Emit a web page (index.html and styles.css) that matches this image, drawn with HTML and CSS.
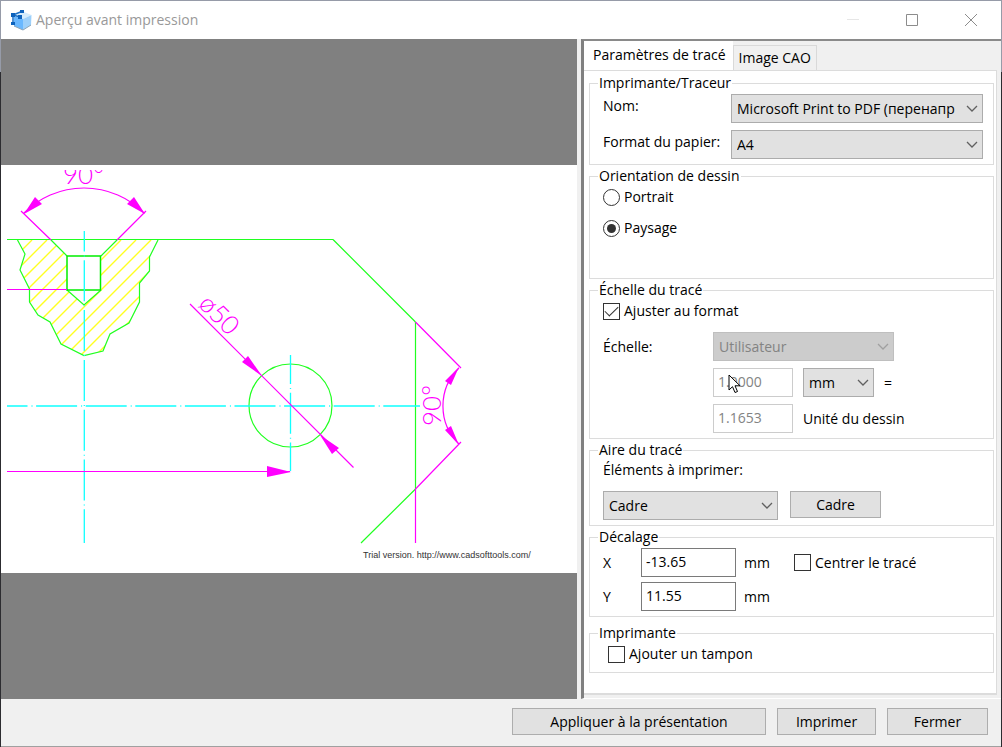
FILE: index.html
```html
<!DOCTYPE html>
<html lang="fr">
<head>
<meta charset="utf-8">
<meta name="viewport" content="width=device-width, initial-scale=1">
<title>Aperçu avant impression</title>
<link rel="stylesheet" href="styles.css">
</head>
<body>
<div class="window">
  <header class="titlebar">
    <svg class="app-icon" viewBox="0 0 21 21" aria-hidden="true">
      <path d="M4 5 L13 2 L20.500 5 L12 9 Z" fill="#d4ecfd"/>
      <path d="M12 9 L20.500 5 L20 15 L12 20 Z" fill="#9dd0fa"/>
      <path d="M3 6 L12 9 L12 20 L3 16 Z" fill="#6ab8ff"/>
      <path d="M3 16L12 20L20 15" stroke="#8fa6b8" fill="none"/>
      <path d="M2 5 L12 1 M2 5 L2 14 M2 5 L9 7" stroke="#1c6fc4" stroke-width="1.500" fill="none"/>
      <g fill="#0e63bd"><rect x="0" y="3" width="4" height="4"/><rect x="9" y="0" width="4" height="3"/><rect x="7" y="5" width="4" height="4"/><rect x="0" y="12" width="4" height="3"/></g>
    </svg>
    <h1 class="title">Aperçu avant impression</h1>
    <button class="caption-button" type="button" aria-label="Réduire" disabled>
      <svg width="14" height="14" viewBox="0 0 14 14"><path d="M1 6.500H13" stroke="#e6e6e6"/></svg>
    </button>
    <button class="caption-button" type="button" aria-label="Agrandir">
      <svg width="14" height="14" viewBox="0 0 14 14"><path d="M1.500 1.500H12.500V12.500H1.500Z" stroke="#8c8c8c" fill="none"/></svg>
    </button>
    <button class="caption-button" type="button" aria-label="Fermer la fenêtre">
      <svg width="14" height="14" viewBox="0 0 14 14"><path d="M1 1L13 13M13 1L1 13" stroke="#8c8c8c" fill="none"/></svg>
    </button>
  </header>

  <main class="content">
    <section class="preview" aria-label="Aperçu">
      <svg class="sheet" viewBox="1 165 576 408">
        <defs>
          <clipPath id="hatch-area">
            <path clip-rule="evenodd" d="M17 240L25 254L20 270L30 289V302L38 315L50 322L61 344L84 355L103 351L110 334L129 323L139 302V283L149 271V257L158 240Z M51 240L67 256V290L84 305L101 290V256L117 240Z"/>
          </clipPath>
          <clipPath id="print-area"><rect x="7" y="170" width="564" height="373"/></clipPath>
        </defs>
        <g clip-path="url(#hatch-area)" stroke="#ffff20" stroke-width="1.400">
          <path d="M17 240L2 255M32 240L2 270M47 240L2 285M62 240L2 300M77 240L2 315M92 240L2 330M106 240L2 344M121 240L2 359M136 240L2 374M151 240L12 379M166 240L27 379M181 240L42 379M196 240L57 379M211 240L72 379M226 240L87 379"/>
        </g>
        <g fill="none" stroke="#20ff20" stroke-width="1.200">
          <path d="M17.500 240L25 254L20 270L29.500 289V302L38 315L50 322L61 344L84 355.500L103 351L110 334L129 323L139.500 302V283L149.500 271V257L158 240"/>
          <path d="M51 240L67 256M101 256L117 240M67 290L84 305L101 290"/>
          <path d="M67 256H100.500V290H67Z" stroke="#00ee00" stroke-width="1.500"/>
          <path d="M333 239.500L415.500 322M415.500 489L361 543"/>
          <path d="M7 239.500H333M415.500 322V489"/>
          <circle cx="290.500" cy="405.500" r="41.500"/>
        </g>
        <g fill="none" stroke="#10ffff" stroke-width="1.300">
          <path d="M84.300 231V543" stroke-dasharray="41 4 1 3.800" stroke-dashoffset="20.500"/>
          <path d="M7 406H420" stroke-dasharray="41 4 1 3.600" stroke-dashoffset="20.500"/>
          <path d="M290.500 355V471" stroke-dasharray="41 4 1 3.800" stroke-dashoffset="12"/>
        </g>
        <g fill="none" stroke="#ff00ff" stroke-width="1.200">
          <path d="M7 289.500H67M7 471.500H290M415.500 489V543"/>
          <path d="M21 211L51 240M146 211L117 240M24 213A84.500 84.500 0 0 1 144 213"/>
          <path d="M190 304L353.500 467.500M415.500 322L461 368M415.500 489L461 442M459 368A53 53 0 0 0 459 444"/>
        </g>
        <g fill="#ff00ff">
          <path d="M24 214L35 197L42 204ZM145 214L134 197L127 204Z"/>
          <path d="M262 376L242 362L248 356ZM320 435L332 454L339 448Z"/>
          <path d="M459 367L445 381L451 385ZM459 445L445 430L451 426ZM291 472L267 466V477Z"/>
        </g>
        <g class="dimension" clip-path="url(#print-area)">
          <text x="63" y="184">90°</text>
          <text text-anchor="middle" transform="translate(213 321) rotate(45)">ø50</text>
          <text transform="translate(441 426) rotate(-90)">90°</text>
        </g>
        <text class="trial" x="363" y="558">Trial version. http://www.cadsofttools.com/</text>
      </svg>
    </section>

    <section class="panel">
      <div class="tabs" role="tablist">
        <button class="tab tab-active" type="button" role="tab" aria-selected="true">Paramètres de tracé</button>
        <button class="tab" type="button" role="tab" aria-selected="false">Image CAO</button>
      </div>
      <form class="settings">
        <fieldset class="group">
          <legend>Imprimante/Traceur</legend>
          <div class="group-body printer-grid">
            <label for="printer">Nom:</label>
            <span class="combo"><select id="printer"><option>Microsoft Print to PDF (перенапр</option></select><svg class="chevron" viewBox="0 0 12 8"><path d="M1 1L6 6L11 1"/></svg></span>
            <label for="paper">Format du papier:</label>
            <span class="combo"><select id="paper"><option>A4</option></select><svg class="chevron" viewBox="0 0 12 8"><path d="M1 1L6 6L11 1"/></svg></span>
          </div>
        </fieldset>

        <fieldset class="group">
          <legend>Orientation de dessin</legend>
          <div class="group-body orientation">
            <label class="choice"><input type="radio" name="orientation">Portrait</label>
            <label class="choice"><input type="radio" name="orientation" checked>Paysage</label>
          </div>
        </fieldset>

        <fieldset class="group">
          <legend>Échelle du tracé</legend>
          <div class="group-body">
            <label class="choice"><input type="checkbox" checked>Ajuster au format</label>
            <div class="scale-grid">
              <label for="scale">Échelle:</label>
              <span class="combo combo-scale"><select id="scale" disabled><option>Utilisateur</option></select><svg class="chevron" viewBox="0 0 12 8"><path d="M1 1L6 6L11 1"/></svg></span>
              <span class="field-wrap">
                <input class="field" type="text" value="1.0000" aria-label="Unités imprimées" disabled>
                <svg class="pointer" viewBox="0 0 13 20" aria-hidden="true"><path d="M1 1V16L4.500 12.700L7 18.500L9.500 17.500L7 11.800H12Z" fill="#fff" stroke="#000"/></svg>
              </span>
              <span class="combo"><select aria-label="Unité"><option>mm</option></select><svg class="chevron" viewBox="0 0 12 8"><path d="M1 1L6 6L11 1"/></svg></span>
              <span>=</span>
              <input class="field scale-drawing" id="drawing-unit" type="text" value="1.1653" disabled>
              <label class="unit-label" for="drawing-unit">Unité du dessin</label>
            </div>
          </div>
        </fieldset>

        <fieldset class="group">
          <legend>Aire du tracé</legend>
          <div class="group-body">
            <label class="area-label" for="area">Éléments à imprimer:</label>
            <div class="area-row">
              <span class="combo combo-area"><select id="area"><option>Cadre</option></select><svg class="chevron" viewBox="0 0 12 8"><path d="M1 1L6 6L11 1"/></svg></span>
              <button class="button button-frame" type="button">Cadre</button>
            </div>
          </div>
        </fieldset>

        <fieldset class="group">
          <legend>Décalage</legend>
          <div class="group-body offset-grid">
            <label for="offset-x">X</label>
            <input class="field" id="offset-x" type="text" value="-13.65">
            <span>mm</span>
            <label class="choice"><input type="checkbox">Centrer le tracé</label>
            <label for="offset-y">Y</label>
            <input class="field" id="offset-y" type="text" value="11.55">
            <span>mm</span>
          </div>
        </fieldset>

        <fieldset class="group group-stamp">
          <legend>Imprimante</legend>
          <div class="group-body">
            <label class="choice"><input type="checkbox">Ajouter un tampon</label>
          </div>
        </fieldset>
      </form>
    </section>
  </main>

  <footer class="actions">
    <button class="button button-apply" type="button">Appliquer à la présentation</button>
    <button class="button button-print" type="button">Imprimer</button>
    <button class="button button-close" type="button">Fermer</button>
  </footer>
</div>
</body>
</html>
```

FILE: styles.css
```css
* {
  box-sizing: border-box;
}

body {
  margin: 0;
  padding: 1px;
  background: linear-gradient(#969ba8 72px, #2c2c30 72px);
  color: #000;
  font: 14px/20px "Open Sans", "Noto Sans", sans-serif;
}

button,
input,
select {
  font: inherit;
  color: inherit;
  margin: 0;
}

.window {
  display: flex;
  flex-direction: column;
  min-height: calc(100vh - 1px);
  background: #f0f0f0;
}

.titlebar {
  display: flex;
  align-items: center;
  height: 38px;
  padding: 0 1px 0 10px;
  background: #fff;
}

.app-icon {
  width: 21px;
  height: 21px;
  margin-right: 4px;
}

.title {
  flex: 1;
  margin: 0;
  color: #999;
  font-size: 14px;
  font-weight: 400;
}

.caption-button {
  display: flex;
  align-items: center;
  justify-content: center;
  width: 59px;
  height: 38px;
  padding: 0;
  border: 0;
  background: none;
}

.content {
  display: flex;
  flex: 1;
}

.preview {
  display: flex;
  flex: 1;
  align-items: center;
  min-width: 0;
  margin-right: 4px;
  background: #808080;
}

.sheet {
  display: block;
  width: 100%;
  background: #fff;
}

.dimension {
  fill: #ff00ff;
  font: 300 26px Lato, "Open Sans", sans-serif;
}

.trial {
  fill: #333;
  font: 9px "Liberation Sans", Arial, sans-serif;
}

.panel {
  display: flex;
  flex-direction: column;
  width: 420px;
  padding: 0 4px 3px 0;
  border-top: 2px solid #8a8a8a;
  border-left: 3px solid #808080;
  border-bottom: 1px solid #fff;
}

.tabs {
  display: flex;
  align-items: flex-end;
  height: 29px;
}

.tab {
  height: 25px;
  padding: 0 5px;
  border: 1px solid #d9d9d9;
  border-bottom: 0;
  background: #f0f0f0;
}

.tab-active {
  height: 29px;
  padding: 0 7px 1px 9px;
  border: 0;
  background: #fff;
}

.settings {
  flex: 1;
  padding: 2px 2px 16px 5px;
  border: solid #dcdcdc;
  border-width: 1px 1px 2px 0;
  background: #fff;
}

.group {
  min-width: 0;
  margin: 0 0 1px;
  padding: 0 10px 5px 8px;
  border: 1px solid #dcdcdc;
}

.group legend {
  height: 20px;
  padding: 0 1px;
}

.group-body {
  padding-left: 5px;
}

.group-stamp {
  margin-top: 6px;
  padding-bottom: 7px;
}

.group-stamp .group-body {
  padding-left: 10px;
}

.printer-grid {
  display: grid;
  grid-template-columns: 128px 1fr;
  gap: 7px 0;
  padding-top: 1px;
  line-height: 24px;
}

.combo {
  display: grid;
  align-items: center;
  height: 29px;
}

.combo > * {
  grid-area: 1 / 1;
}

.combo select {
  width: 100%;
  height: 29px;
  padding: 0 24px 0 5px;
  border: 1px solid #acacac;
  border-radius: 0;
  background: #e1e1e1;
  appearance: none;
}

.combo select:disabled {
  border-color: #bfbfbf;
  background: #ccc;
  color: #838383;
  opacity: 1;
}

.chevron {
  justify-self: end;
  width: 12px;
  height: 8px;
  margin-right: 5px;
  fill: none;
  stroke: #606060;
  stroke-width: 1.3;
  pointer-events: none;
}

select:disabled + .chevron {
  stroke: #a0a0a0;
}

.orientation {
  display: grid;
  gap: 9px;
  padding-bottom: 34px;
}

.choice {
  display: flex;
  align-items: center;
  gap: 4px;
  height: 22px;
}

.choice input {
  display: grid;
  place-content: center;
  width: 17px;
  height: 17px;
  border: 1px solid #333;
  background: #fff;
  appearance: none;
}

.choice input[type="radio"] {
  border-radius: 50%;
}

.choice input[type="radio"]:checked::before {
  width: 9px;
  height: 9px;
  border-radius: 50%;
  background: #333;
  content: "";
}

.choice input[type="checkbox"]:checked::before {
  width: 12px;
  height: 6px;
  border: solid #333;
  border-width: 0 0 1px 1px;
  transform: translateY(-2px) rotate(-45deg);
  content: "";
}

.scale-grid {
  display: grid;
  grid-template-columns: 100px 80px 71px 1fr;
  gap: 7px 10px;
  align-items: center;
  padding-top: 10px;
}

.combo-scale {
  grid-column: 2 / 5;
  width: 181px;
}

.field-wrap {
  position: relative;
  grid-column: 2;
}

.field {
  display: block;
  width: 100%;
  height: 29px;
  padding: 0 4px 2px;
  border: 1px solid #7a7a7a;
  border-radius: 0;
  background: #fff;
}

.field:disabled {
  border-color: #ccc;
  color: #838383;
}

.pointer {
  position: absolute;
  top: 6px;
  left: 15px;
  width: 13px;
  height: 20px;
}

.scale-drawing {
  grid-column: 2;
}

.unit-label {
  grid-column: 3 / 5;
}

.area-label {
  display: block;
}

.area-row {
  display: flex;
  gap: 12px;
  padding-top: 11px;
}

.combo-area {
  width: 175px;
}

.button {
  height: 27px;
  padding: 0;
  border: 1px solid #adadad;
  background: #e1e1e1;
}

.button-frame {
  width: 91px;
}

.offset-grid {
  display: grid;
  grid-template-columns: 30px 95px 42px 1fr;
  gap: 5px 8px;
  align-items: center;
  padding-top: 1px;
}

.actions {
  display: flex;
  justify-content: flex-end;
  gap: 11px;
  padding: 9px 13px 11px;
  border-bottom: 1px solid #a0a0a0;
}

.button-apply {
  width: 254px;
}

.button-print {
  width: 99px;
}

.button-close {
  width: 101px;
}
```
